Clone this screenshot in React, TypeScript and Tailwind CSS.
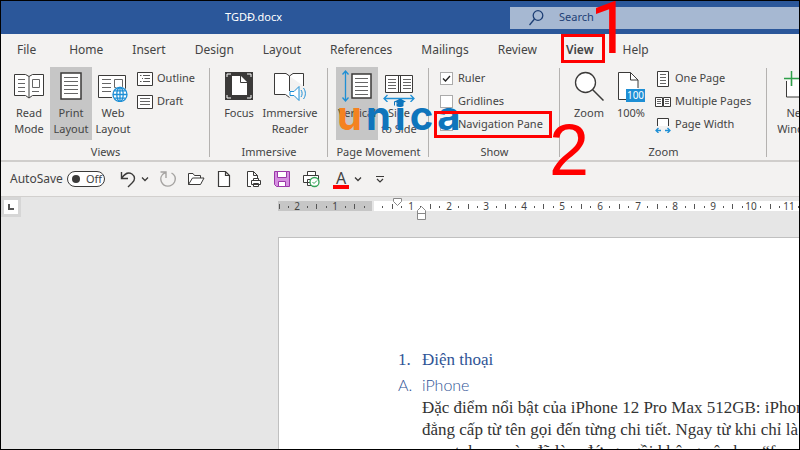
import type { ReactNode } from "react";

const TABS = ["File", "Home", "Insert", "Design", "Layout", "References", "Mailings", "Review", "View", "Help"];

const Lines = ({ x, y, w, n, step = 4 }: { x: number; y: number; w: number; n: number; step?: number }) => (
  <>
    {Array.from({ length: n }, (_, i) => (
      <path key={i} d={`M${x} ${y + i * step}h${w}`} stroke="#666" />
    ))}
  </>
);

const Icon = ({ w, h, children }: { w: number; h: number; children: ReactNode }) => (
  <svg width={w} height={h} viewBox={`0 0 ${w} ${h}`} fill="none" stroke="#3b3a39" className="shrink-0" aria-hidden="true">
    {children}
  </svg>
);

const ReadModeIcon = () => (
  <Icon w={30} h={32}>
    <path d="M.5 4.500h11l3.500 2 3.500-2h11v21h-11L15 28l-3.500-2.500H.5z" fill="#fff" />
    <path d="M15 6.500v21" />
    <Lines x={4} y={9.5} w={7} n={4} />
    <path d="M18.500 9.500h7v8h-7z" stroke="#666" />
    <Lines x={18} y={21.5} w={7} n={1} />
  </Icon>
);

const PrintLayoutIcon = () => (
  <Icon w={22} h={32}>
    <path d="M1 3h20v26H1z" fill="#fff" strokeWidth="1.5" />
    <Lines x={4} y={7.5} w={14} n={5} />
  </Icon>
);

const WebLayoutIcon = () => (
  <Icon w={30} h={32}>
    <path d="M.5 5.500h27v22H.5z" fill="#fff" />
    <Lines x={4} y={9.5} w={9} n={4} />
    <path d="M16.500 9.500h8v8h-8z" stroke="#666" />
    <circle cx="22" cy="25" r="7" fill="#f3f2f1" stroke="#f3f2f1" strokeWidth="3" />
    <g stroke="#1e8fd5" strokeWidth="1.300">
      <circle cx="22" cy="24.500" r="7" fill="#fff" />
      <ellipse cx="22" cy="24.500" rx="3.200" ry="7" />
      <path d="M22 17.500v14M15 24.500h14M16.500 20.800h11M16.500 28.200h11" />
    </g>
  </Icon>
);

const FocusIcon = () => (
  <Icon w={28} h={32}>
    <path d="M0 2h28v28H0z" fill="#3b3a39" stroke="none" />
    <path d="M2 7V4h4M22 4h4v3M26 25v3h-4M6 28H2v-3" stroke="#fff" />
    <path d="M7 6h9l6 6v13H7z" fill="#fff" stroke="none" />
    <path d="M15.500 6v6.500H22" />
  </Icon>
);

const ImmersiveIcon = () => (
  <Icon w={32} h={32}>
    <path d="M15.500 6 12 3.500H.5v21h11l4 3" fill="#fff" />
    <path d="M15.500 6 19 3.500h10.500V16M15.500 6v15" fill="#fff" />
    <path d="M16 21.500h4l5-5v14l-5-5h-4z" fill="#fff" stroke="#1e8fd5" />
    <path d="M27 20c1.500 2 1.500 5 0 7M29.500 18c2.500 3.500 2.500 7.500 0 11" stroke="#1e8fd5" />
  </Icon>
);

const VerticalIcon = () => (
  <Icon w={32} h={32}>
    <path d="M4.500 1v30M1.500 4.500l3-3.500 3 3.500M1.500 27.500l3 3.500 3-3.500" stroke="#1e8fd5" strokeWidth="1.300" />
    <path d="M11 4h19v24H11z" fill="#fff" strokeWidth="1.500" />
    <Lines x={14} y={8.5} w={13} n={5} />
  </Icon>
);

const SideIcon = () => (
  <Icon w={32} h={32}>
    <path d="M2.500 5.500h27v17h-27zM15.500 5.500v17M17.500 5.500v17" fill="#fff" />
    <Lines x={5} y={9.500} w={8} n={4} step={3} />
    <Lines x={20} y={9.500} w={8} n={4} step={3} />
    <path d="M1 28.500h30M4.500 25 1 28.500 4.500 32M27.500 25l3.500 3.500-3.500 3.500" stroke="#1e8fd5" strokeWidth="1.300" />
  </Icon>
);

const ZoomIcon = () => (
  <Icon w={30} h={32}>
    <circle cx="11.500" cy="12.500" r="10" fill="#fff" strokeWidth="1.300" />
    <path d="M18.500 19.500 29.500 30.500" strokeWidth="1.500" />
  </Icon>
);

const HundredIcon = () => (
  <Icon w={28} h={32}>
    <path d="M1 2.500h12l8 8V29H1z" fill="#fff" stroke="none" />
    <path d="M9 29.500H1.500v-27h12l7.500 7.500v8M13.500 2.500v7.500H21" />
    <path d="M9 19h19v13H9z" fill="#1e8fd5" stroke="none" />
    <text x="18.500" y="29" textAnchor="middle" fontSize="10" fill="#fff" stroke="none" fontFamily="Noto Sans">100</text>
  </Icon>
);

const NewWindowIcon = () => (
  <Icon w={32} h={32}>
    <path d="M4.500 11v16h27V8H13" fill="#fff" />
    <path d="M2 8.500h15M9.500 1v15" stroke="#f3f2f1" strokeWidth="3" />
    <path d="M2 8.500h15M9.500 1v15" stroke="#2ea04a" strokeWidth="1.500" />
  </Icon>
);

const BigButton = ({ icon, lines, active, width = "w-[42px]" }: { icon: ReactNode; lines: string[]; active?: boolean; width?: string }) => (
  <button className={`flex h-[73px] shrink-0 flex-col items-center pt-[3px] leading-4 ${width} ${active ? "bg-[#c6c6c6]" : ""}`}>
    {icon}
    <span className="mt-[3px] flex flex-col items-center whitespace-nowrap">
      {lines.map((line) => (
        <span key={line}>{line}</span>
      ))}
    </span>
  </button>
);

const SmallButton = ({ icon, label }: { icon: ReactNode; label: string }) => (
  <button className="flex h-[23px] items-center gap-1 whitespace-nowrap">
    {icon}
    {label}
  </button>
);

const Check = ({ label, checked }: { label: string; checked?: boolean }) => (
  <label className="flex h-[23px] items-center gap-[5px] whitespace-nowrap">
    <span className="grid size-[13px] shrink-0">
      <input
        type="checkbox"
        defaultChecked={checked}
        className="peer col-start-1 row-start-1 size-[13px] appearance-none border border-[#ababab] bg-white"
      />
      <svg viewBox="0 0 13 13" fill="none" stroke="#222" strokeWidth="1.400" className="pointer-events-none invisible col-start-1 row-start-1 peer-checked:visible">
        <path d="M3 6.500 5.500 9l4.500-5" />
      </svg>
    </span>
    {label}
  </label>
);

const Group = ({ label, width, inset = "pl-2", children }: { label: string; width: string; inset?: string; children: ReactNode }) => (
  <section className={`relative flex shrink-0 flex-col ${width}`}>
    <div className={`flex h-[77px] ${inset}`}>{children}</div>
    <h2 className="text-center leading-4">{label}</h2>
    <span className="absolute top-px right-0 h-[89px] w-px bg-[#b4b2b0]" />
  </section>
);

const Ribbon = () => (
  <div className="flex h-[97px] shrink-0 overflow-hidden border-b-2 border-[#d0cecc] pt-[2px] text-[11px]">
    <Group label="Views" width="w-[209px]" inset="pl-[7px]">
      <BigButton icon={<ReadModeIcon />} lines={["Read", "Mode"]} />
      <BigButton icon={<PrintLayoutIcon />} lines={["Print", "Layout"]} active />
      <BigButton icon={<WebLayoutIcon />} lines={["Web", "Layout"]} />
      <div className="pl-[3px]">
        <SmallButton
          label="Outline"
          icon={
            <Icon w={16} h={14}>
              <path d="M.5.5h15v13H.5z" fill="#fff" />
              <path d="M3 3.500h1.500M6 3.500h7M5 6.500h1M7.500 6.500H13M3 9.500h1.500M6 9.500h7" stroke="#555" />
            </Icon>
          }
        />
        <SmallButton
          label="Draft"
          icon={
            <Icon w={16} h={14}>
              <path d="M.5.5h15v13H.5z" fill="#fff" />
              <Lines x={3} y={3.5} w={10} n={3} step={3} />
            </Icon>
          }
        />
      </div>
    </Group>
    <Group label="Immersive" width="w-[118px]">
      <BigButton icon={<FocusIcon />} lines={["Focus"]} />
      <BigButton icon={<ImmersiveIcon />} lines={["Immersive", "Reader"]} width="w-[60px]" />
    </Group>
    <Group label="Page Movement" width="w-[101px]">
      <BigButton icon={<VerticalIcon />} lines={["Vertical"]} active />
      <BigButton icon={<SideIcon />} lines={["Side", "to Side"]} />
    </Group>
    <Group label="Show" width="w-[131px]" inset="pl-[11px]">
      <div>
        <Check label="Ruler" checked />
        <Check label="Gridlines" />
        <Check label="Navigation Pane" />
      </div>
    </Group>
    <Group label="Zoom" width="w-[207px]">
      <BigButton icon={<ZoomIcon />} lines={["Zoom"]} />
      <BigButton icon={<HundredIcon />} lines={["100%"]} />
      <div className="pl-[3px]">
        <SmallButton
          label="One Page"
          icon={
            <Icon w={16} h={16}>
              <path d="M2.500.5h11v15h-11z" fill="#fff" />
              <Lines x={5} y={3.5} w={6} n={4} step={3} />
            </Icon>
          }
        />
        <SmallButton
          label="Multiple Pages"
          icon={
            <Icon w={16} h={10}>
              <path d="M.5.5h7v9h-7zM8.500.5h7v9h-7z" fill="#fff" />
              <Lines x={2} y={2.500} w={4} n={3} step={2} />
              <Lines x={10} y={2.500} w={4} n={3} step={2} />
            </Icon>
          }
        />
        <SmallButton
          label="Page Width"
          icon={
            <Icon w={16} h={16}>
              <path d="M2.500 9V1.500h11V9" fill="#fff" />
              <path d="M1 13.500h5M10 13.500h5M3.500 11 1 13.500 3.500 16M12.500 11l2.500 2.500-2.500 2.500" stroke="#1e8fd5" strokeWidth="1.300" />
            </Icon>
          }
        />
      </div>
    </Group>
    <BigButton icon={<NewWindowIcon />} lines={["New", "Window"]} width="w-[62px]" />
  </div>
);

const Chevron = () => (
  <Icon w={8} h={6}>
    <path d="M1 1.500 4 4.500l3-3" strokeWidth="1.300" />
  </Icon>
);

const QuickAccess = () => (
  <div className="flex h-[34px] shrink-0 items-center pl-[9px]">
    <label htmlFor="autosave" className="w-[57px] whitespace-nowrap">AutoSave</label>
    <button id="autosave" role="switch" aria-checked="false" className="flex h-4 w-[38px] items-center gap-[6px] rounded-full border border-[#3b3a39] bg-white pl-1 text-[11px]">
      <span className="size-2 rounded-full bg-[#3b3a39]" />
      Off
    </button>
    <button aria-label="Undo" className="ml-[15px]">
      <Icon w={16} h={18}>
        <path d="M1.500 2v6.500H8M1.500 8.500C4 4.500 8 1.500 12 4c3.500 2.500 3 6 .5 8.500L8 17" strokeWidth="1.400" />
      </Icon>
    </button>
    <button aria-label="Undo history" className="ml-[5px]"><Chevron /></button>
    <button aria-label="Redo" className="ml-[10px]">
      <Icon w={18} h={18}>
        <path d="M1.500 2H7v6M6.500 2.500C2 4.500 1 8.500 2.500 12c2.500 5.500 10 5.500 13 0 1.500-3.500.5-7-3-9" stroke="#a5a3a1" strokeWidth="1.400" />
      </Icon>
    </button>
    <button aria-label="Open" className="ml-[10px]">
      <Icon w={18} h={14}>
        <path d="M1.500 12.500v-11h4.500l1.500 2h6v2.500M1.500 12.500l4-6.500h11.500l-3.500 6.500z" fill="#fff" />
      </Icon>
    </button>
    <button aria-label="New" className="ml-[12px]">
      <Icon w={14} h={18}>
        <path d="M1.500 1.500h7l4 4v11h-11zM8.500 1.500v4h4" fill="#fff" strokeWidth="1.200" />
      </Icon>
    </button>
    <button aria-label="Print preview" className="ml-[15px]">
      <Icon w={16} h={18}>
        <path d="M5 16.500H1.500v-15h6l4 4V9M7.500 1.500v4h4" fill="#fff" />
        <path d="M5.500 10.500h9v4h-9zM7.500 10.500v-2h5v2M7.500 13.500h5v3h-5z" fill="#fff" />
      </Icon>
    </button>
    <button aria-label="Save" className="ml-[12px]">
      <Icon w={16} h={18}>
        <path d="M.5 1.500h15v15h-13l-2-2z" fill="#d58fe0" stroke="#9b37a8" />
        <path d="M3.500 1.500h9v6h-9zM4.500 11.500h7v5h-7z" fill="#fff" stroke="#9b37a8" />
      </Icon>
    </button>
    <button aria-label="Quick print" className="ml-[13px]">
      <Icon w={18} h={18}>
        <path d="M4.500 5.500v-4h8v4M.5 5.500h15v7H.5zM4.500 9.500h8v6h-8z" fill="#fff" />
        <circle cx="11.500" cy="12" r="4.500" fill="#fff" stroke="#33a457" strokeWidth="1.300" />
        <path d="m9.500 12 1.500 1.500 3-3" stroke="#33a457" />
      </Icon>
    </button>
    <button aria-label="Font color" className="ml-[12px] flex w-4 flex-col items-center text-base leading-4">
      <span className="-mb-px">A</span>
      <span className="h-1 w-4 bg-[#ff0000]" />
    </button>
    <button aria-label="Font color options" className="ml-[5px]"><Chevron /></button>
    <button aria-label="Customize toolbar" className="ml-[14px]">
      <Icon w={8} h={8}>
        <path d="M0 1.500h8M1 4l3 3 3-3" strokeWidth="1.200" />
      </Icon>
    </button>
  </div>
);

// One centimetre on the ruler, measured from the left page margin
const CM = 37.8;
const ORIGIN = 95;

const Ruler = () => (
  <svg height="24" className="w-full" aria-hidden="true">
    <rect x="0" y="4" width="94" height="10" fill="#c6c6c6" />
    <rect x="96" y="4" width="100%" height="10" fill="#fff" />
    {Array.from({ length: 60 }, (_, i) => {
      const q = i - 10;
      const x = Math.round(ORIGIN + (q * CM) / 4);
      if (q === 0 || q > 45) return null;
      if (q % 4 === 0)
        return (
          <text key={q} x={x} y="13" textAnchor="middle" fontSize="10" fill="#444" fontFamily="Noto Sans">
            {Math.abs(q / 4)}
          </text>
        );
      const tall = q % 2 === 0;
      return <rect key={q} x={x} y={tall ? 7 : 9} width="1" height={tall ? 5 : 2} fill="#555" />;
    })}
    <path d="M115.500 1.500h8v3l-4 4-4-4z" fill="#fff" stroke="#888" />
    <path d="M139.500 22.500v-9l4-4 4 4v9zM139.500 16.500h8" fill="#fff" stroke="#888" />
  </svg>
);

const Watermark = () => (
  <div className="absolute top-[90px] left-[336px] flex gap-[4px] font-['Inter'] text-[40px] leading-[50px] font-bold text-[#0f75bc]">
    <span className="text-[#f58220]">u</span>
    <span>n</span>
    <span>i</span>
    <span>c</span>
    <span>a</span>
    <svg width="12" height="8" viewBox="0 0 12 8" className="absolute top-[8px] left-[57px]" fill="#0f75bc" aria-hidden="true">
      <path d="M6 0l6 2.500L6 5 0 2.500zM2.500 4 6 5.500 9.500 4v3c-1.500 1.300-5.500 1.300-7 0zM0 2.500h1v4H0z" />
    </svg>
  </div>
);

export default function App() {
  return (
    <div className="relative flex h-screen flex-col overflow-hidden border border-black bg-[#f3f2f1] font-['Noto_Sans',sans-serif] text-[12px] text-[#444]">
      <header className="flex h-[33px] shrink-0 items-center bg-[#2b579a]">
        <h1 className="w-[509px] shrink-0 pl-[224px] text-[11px] text-white">TGDĐ.docx</h1>
        <label className="flex h-[22px] min-w-0 flex-1 items-center gap-[15px] bg-[#a6b8d2] pl-[19px]">
          <svg width="15" height="16" viewBox="0 0 15 16" fill="none" stroke="#1e3f75" strokeWidth="1.300" className="shrink-0" aria-label="Search">
            <circle cx="9" cy="5.500" r="4.800" />
            <path d="M5.500 9 .5 15" />
          </svg>
          <input type="text" placeholder="Search" className="min-w-0 flex-1 text-[11px] outline-none placeholder:text-[#1e3f75]" />
        </label>
      </header>

      <nav className="flex h-[31px] shrink-0 items-center gap-[29px] pl-4">
        {TABS.map((tab) => (
          <button key={tab} className={tab === "View" ? "font-semibold" : "first:mr-1"}>
            {tab}
          </button>
        ))}
      </nav>

      <Ribbon />
      <QuickAccess />

      <main className="flex min-h-0 flex-1 border-t border-[#d2d0ce] bg-[#e6e6e6]">
        <div className="w-[277px] shrink-0">
          <button aria-label="Tab stop" className="flex size-5 items-center justify-center border-[3px] border-[#d6d6d6] bg-white">
            <svg width="6" height="6" aria-hidden="true">
              <path d="M1 0v5h5" fill="none" stroke="#555" strokeWidth="2" />
            </svg>
          </button>
        </div>
        <div className="flex min-w-0 flex-1 flex-col">
          <Ruler />
          <article className="mt-4 flex-1 overflow-hidden border-t border-l border-[#c0c0c0] bg-white pt-[109px] pl-[119px] font-['Liberation_Serif',serif] text-[17px] leading-[22px] whitespace-nowrap text-[#333]">
            <h2 className="flex h-[25px] items-center text-[#2f5496]">
              <span className="w-6">1.</span>Điện thoại
            </h2>
            <h3 className="flex h-[25px] items-center font-['Lato',sans-serif] text-[16px] font-light text-[#2f5496]">
              <span className="w-6">A.</span>iPhone
            </h3>
            <p className="pl-6">
              Đặc điểm nổi bật của iPhone 12 Pro Max 512GB: iPhone
              <br />
              đẳng cấp từ tên gọi đến từng chi tiết. Ngay từ khi chỉ là
              <br />
              smartphone này đã làm đứng ngồi không yên bao “fan
            </p>
          </article>
        </div>
      </main>

      <Watermark />

      {/* Step markers */}
      <div className="absolute top-[33px] left-[560px] h-[29px] w-[44px] border-3 border-[#ff0000]" />
      <span className="absolute top-[-8px] left-[589px] font-['Roboto',sans-serif] text-[72px] leading-[72px] text-[#ff0000]">1</span>
      <div className="absolute top-[110px] left-[433px] h-[27px] w-[118px] border-3 border-[#ff0000]" />
      <span className="absolute top-[113px] left-[548px] font-['Liberation_Sans',sans-serif] text-[72px] leading-[72px] text-[#ff0000]">2</span>
    </div>
  );
}
